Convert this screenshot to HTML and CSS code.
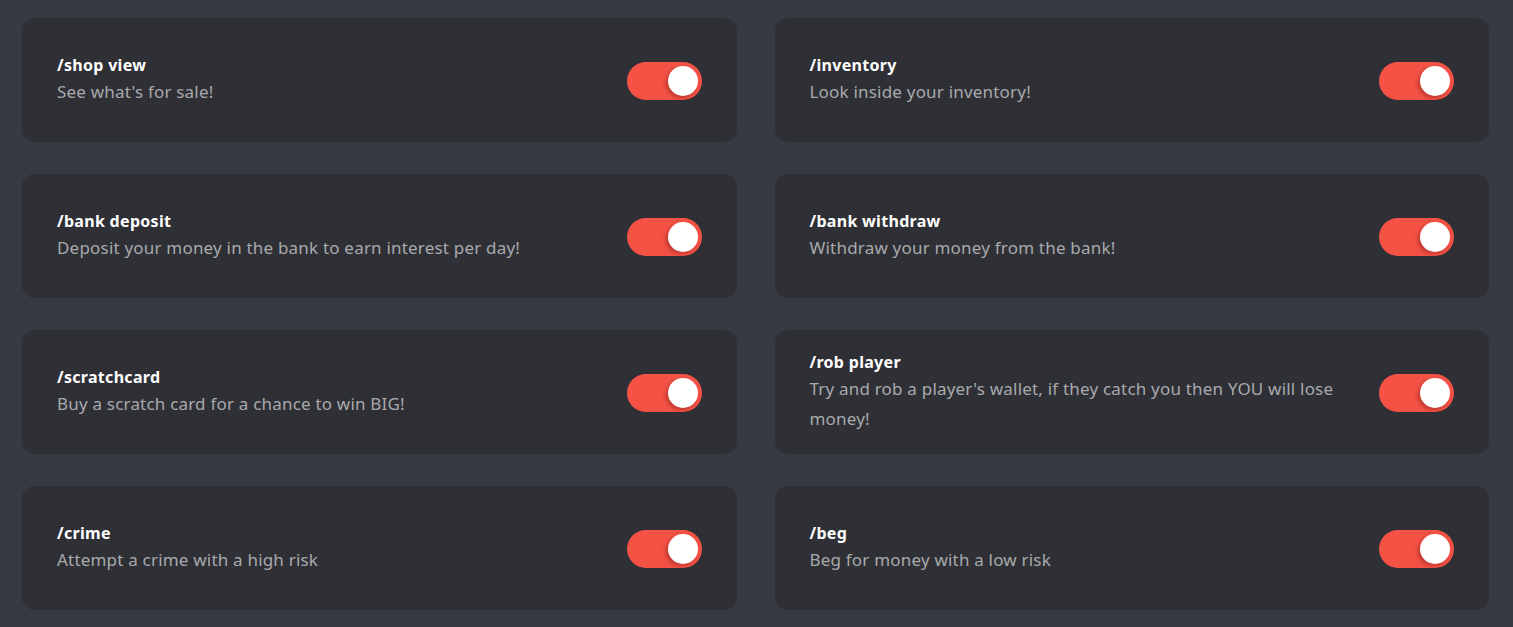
FILE: index.html
```html
<!DOCTYPE html>
<html lang="en">
<head>
<meta charset="utf-8">
<title>Commands</title>
<link rel="stylesheet" href="styles.css">
</head>
<body>
<main class="grid">
  <div class="card">
    <div class="text"><div class="title">/shop view</div><div class="desc">See what's for sale!</div></div>
    <span class="toggle"><span class="knob"></span></span>
  </div>
  <div class="card">
    <div class="text"><div class="title">/inventory</div><div class="desc">Look inside your inventory!</div></div>
    <span class="toggle"><span class="knob"></span></span>
  </div>
  <div class="card">
    <div class="text"><div class="title">/bank deposit</div><div class="desc">Deposit your money in the bank to earn interest per day!</div></div>
    <span class="toggle"><span class="knob"></span></span>
  </div>
  <div class="card">
    <div class="text"><div class="title">/bank withdraw</div><div class="desc">Withdraw your money from the bank!</div></div>
    <span class="toggle"><span class="knob"></span></span>
  </div>
  <div class="card">
    <div class="text"><div class="title">/scratchcard</div><div class="desc">Buy a scratch card for a chance to win BIG!</div></div>
    <span class="toggle"><span class="knob"></span></span>
  </div>
  <div class="card">
    <div class="text"><div class="title">/rob player</div><div class="desc">Try and rob a player's wallet, if they catch you then YOU will lose money!</div></div>
    <span class="toggle"><span class="knob"></span></span>
  </div>
  <div class="card">
    <div class="text"><div class="title">/crime</div><div class="desc">Attempt a crime with a high risk</div></div>
    <span class="toggle"><span class="knob"></span></span>
  </div>
  <div class="card">
    <div class="text"><div class="title">/beg</div><div class="desc">Beg for money with a low risk</div></div>
    <span class="toggle"><span class="knob"></span></span>
  </div>
</main>
</body>
</html>
```
FILE: styles.css
```css
html, body {
  margin: 0;
  padding: 0;
  background: #373a43;
  font-family: "Noto Sans", "Liberation Sans", sans-serif;
}
.grid {
  display: grid;
  grid-template-columns: 1fr 1fr;
  column-gap: 38px;
  row-gap: 32px;
  padding: 18px 24px 16px 22px;
}
.card {
  height: 124px;
  box-sizing: border-box;
  background: #2f3035;
  border-radius: 13px;
  padding: 0 35px;
  display: flex;
  align-items: center;
  justify-content: space-between;
  gap: 30px;
}
.text {
  flex: 1;
  min-width: 0;
}
.title {
  color: #ffffff;
  font-weight: 700;
  font-size: 16px;
  letter-spacing: 0.3px;
  line-height: 24px;
}
.desc {
  color: #a8a9ad;
  font-size: 17px;
  letter-spacing: 0.2px;
  line-height: 30px;
}
.toggle {
  flex: none;
  width: 75px;
  height: 38px;
  border-radius: 19px;
  background: #f55246;
  display: flex;
  align-items: center;
  justify-content: flex-end;
  padding-right: 4px;
  box-sizing: border-box;
  margin-top: 2px;
}
.knob {
  width: 30px;
  height: 30px;
  border-radius: 50%;
  background: #ffffff;
  box-shadow: -2px 2px 4px rgba(120, 20, 10, 0.45);
}
```
